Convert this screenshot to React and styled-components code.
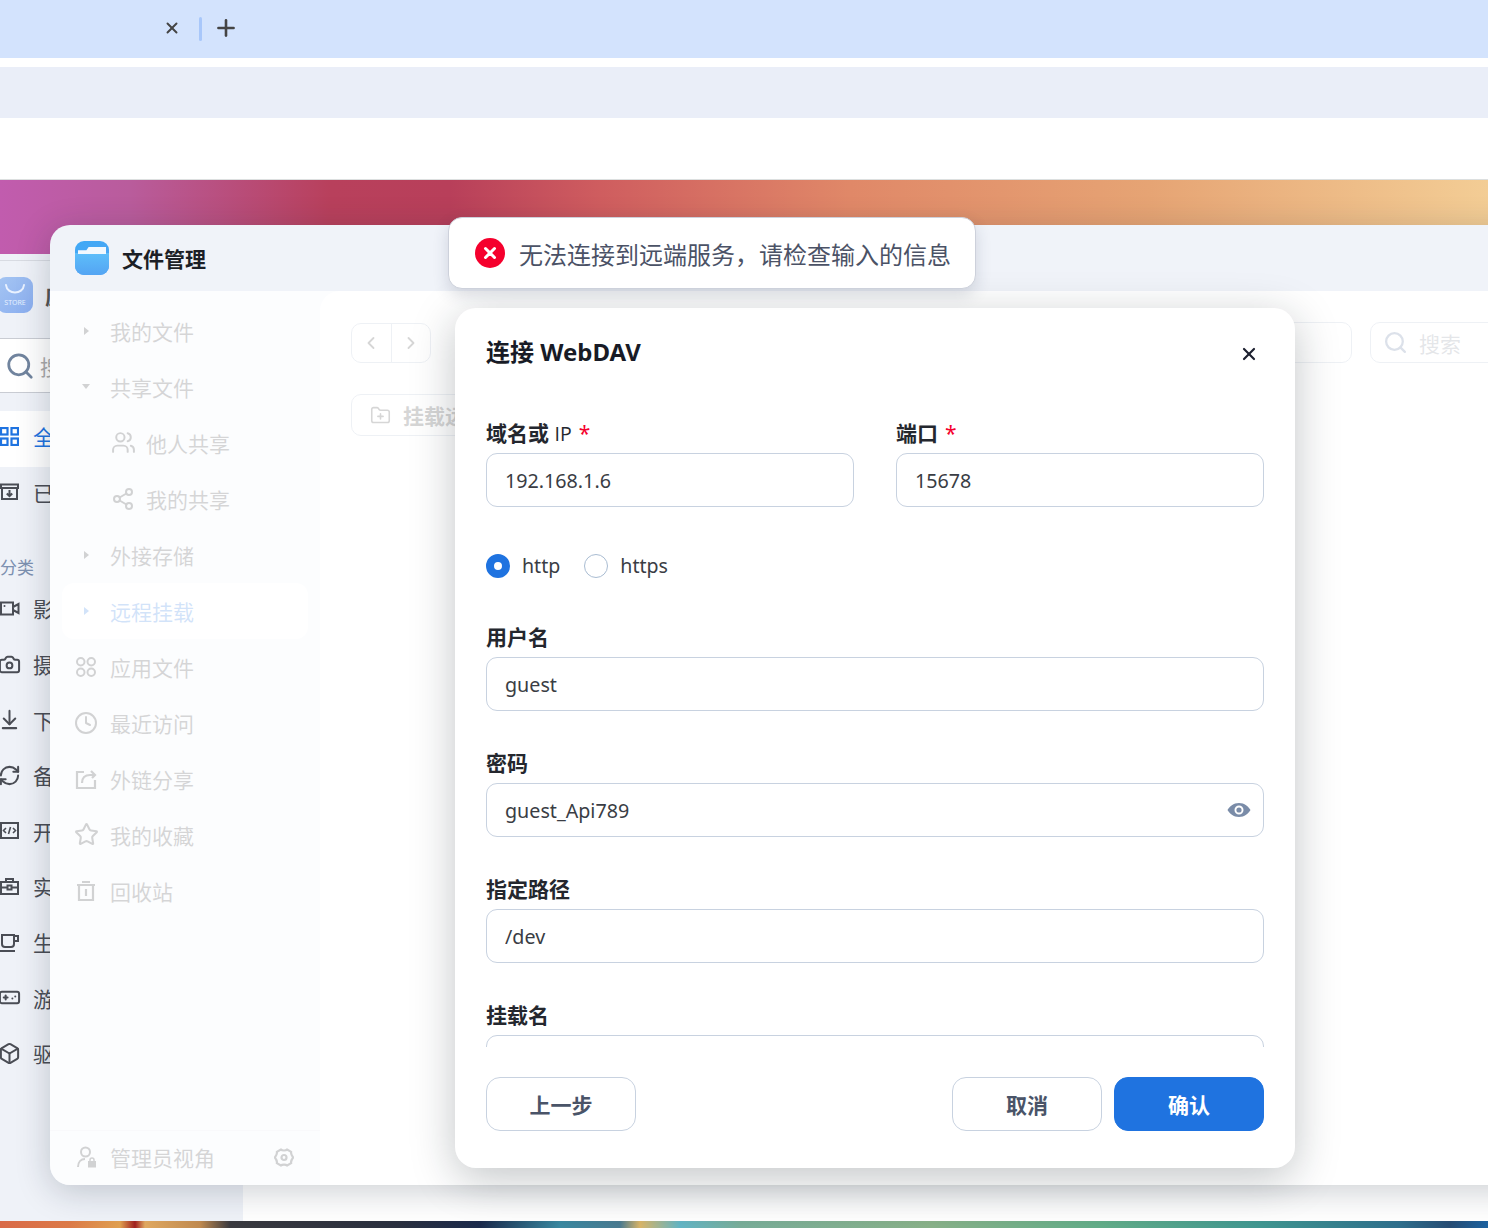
import React from 'react'
import styled, { createGlobalStyle } from 'styled-components'
import {
  X, Plus, ChevronLeft, ChevronRight, Search, Users, Share2, Clock, Star, FolderPlus,
  Camera, ArrowDownToLine, RefreshCw, Gamepad, Box,
} from 'lucide-react'

const GlobalStyle = createGlobalStyle`
  html, body { margin: 0; padding: 0; height: 100%; overflow: hidden; background: #fff; }
  body { font-family: "Noto Sans", "Noto Sans CJK SC", sans-serif; color: #333; }
  * { box-sizing: border-box; }
`

const Page = styled.div`
  width: 1488px;
  height: 1228px;
  display: flex;
  flex-direction: column;
  overflow: hidden;
`

const TabBar = styled.div`
  height: 58px;
  background: #d3e3fd;
  display: flex;
  align-items: center;
  padding: 0 0 2px 163px;
  color: #444;
`
const TabDivider = styled.div`
  width: 3px;
  height: 24px;
  margin: 2px 11px 0 18px;
  border-radius: 2px;
  background: #a8c7fa;
`
const AddressBar = styled.div`
  height: 51px;
  margin-top: 9px;
  background: #eaeef8;
`
const Blank = styled.div`
  height: 62px;
  border-bottom: 1px solid #dcdfdf;
`

const Desktop = styled.div`
  position: relative;
  flex: 1;
  background:
    linear-gradient(90deg, #d96a48 0, #dc7a48 70px, #e0a050 120px, #a02020 135px, #e0a860 145px, #c08a50 200px, #3a3a40 230px, #2a3040 400px, #1b2a4c 480px, #3a88a0 560px, #4a7a90 620px, #d8b468 640px, #62b4c4 680px, #78ac98 740px, #88b088 930px, #62ac88 1100px, #409690 1260px, #2e6e8c 1400px, #264c74 1450px, #1c62a0 1488px) bottom / 100% 7px no-repeat,
    linear-gradient(90deg, #c15cae 0, #b95c9c 130px, #b8405c 330px, #b83f5a 450px, #cf5d5f 600px, #e08868 850px, #e6a474 1150px, #f3cd95 1488px);
`

/* store window behind */
const StoreWindow = styled.div`
  position: absolute;
  left: -20px;
  top: 74px;
  width: 1530px;
  height: 967px;
  display: grid;
  grid-template-columns: 263px 1fr;
  border-radius: 14px 14px 0 0;
  overflow: hidden;
  background: #fff;
`
const StoreSide = styled.div`
  background: #eff2f8;
  display: flex;
  flex-direction: column;
  padding-top: 6px;
`
const StoreBrand = styled.div`
  height: 79px;
  display: flex;
  align-items: center;
  gap: 12px;
  padding: 0 0 10px 17px;
  border-top: 1px solid #d8dbe2;
  border-bottom: 1px solid #c9ccd3;
  font-size: 21px;
  font-weight: 700;
  color: #555;
`
const StoreLogo = styled.div`
  width: 36px;
  height: 36px;
  border-radius: 9px;
  background: linear-gradient(135deg, #a5c5f2, #8aaef0);
  display: flex;
  flex-direction: column;
  align-items: center;
  justify-content: center;
  color: #e6f0ff;
  font-size: 7px;
  line-height: 8px;
  font-weight: 400;
  svg { display: block; margin-bottom: 4px; }
`
const StoreSearch = styled.div`
  height: 54px;
  background: #fff;
  border-bottom: 1px solid #c9ccd3;
  display: flex;
  align-items: center;
  gap: 5px;
  padding-left: 25px;
  font-size: 21px;
  color: #aaa;
  svg { color: #71849e; }
`
const StoreList = styled.div`
  padding-top: 18px;
  display: flex;
  flex-direction: column;
`
const StoreRow = styled.div`
  height: 55.6px;
  display: flex;
  align-items: center;
  gap: 14px;
  padding: 0 0 5px 20px;
  font-size: 21px;
  white-space: nowrap;
  color: ${p => (p.$active ? '#1f73e0' : '#4a4d55')};
  background: ${p => (p.$active ? '#fff' : 'transparent')};
`
const StoreIcon = styled.span`
  width: 19px;
  height: 24px;
  flex: none;
  display: flex;
  align-items: center;
  justify-content: center;
  svg { flex: none; }
`
const StoreLabel = styled.div`
  height: 61px;
  padding: 33px 0 0 20px;
  font-size: 17px;
  line-height: 26px;
  color: #7c90b0;
`
const StoreContent = styled.div`
  background: #fff;
`

/* file manager */
const FileWindow = styled.div`
  position: absolute;
  left: 50px;
  top: 45px;
  width: 1530px;
  height: 960px;
  display: flex;
  flex-direction: column;
  border-radius: 20px;
  background: #f0f3f9;
  box-shadow: 0 6px 34px rgba(20, 30, 50, 0.22);
`
const FileHeader = styled.div`
  height: 66px;
  flex: none;
  display: flex;
  align-items: center;
  gap: 13px;
  padding-left: 25px;
  font-size: 21px;
  font-weight: 700;
  color: #1c1f26;
`
const FolderLogo = styled.div`
  position: relative;
  width: 34px;
  height: 34px;
  border-radius: 9px;
  background: linear-gradient(160deg, #3fa9f6, #54a2f2);
  overflow: hidden;
`
const FolderTab = styled.div`
  position: absolute;
  left: 3px;
  right: 3px;
  top: 6px;
  height: 7px;
  background: #f2f8fe;
  clip-path: polygon(0 45%, 30% 45%, 38% 0, 100% 0, 100% 100%, 0 100%);
`
const FolderFront = styled.div`
  position: absolute;
  left: 0;
  right: 0;
  top: 12px;
  bottom: 0;
  background: linear-gradient(180deg, #5dbefa, #54a4f3);
`
const FileBody = styled.div`
  position: relative;
  flex: 1;
  display: flex;
  min-height: 0;
`
const Sidebar = styled.div`
  width: 270px;
  flex: none;
  display: flex;
  flex-direction: column;
`
const SideList = styled.div`
  flex: 1;
  padding: 12px 12px 0;
`
const SideRow = styled.div`
  height: 56px;
  display: flex;
  align-items: center;
  gap: ${p => (p.$sub ? '12px' : '14px')};
  padding: 0 0 1px ${p => (p.$sub ? '50px' : '14px')};
  border-radius: 12px;
  font-size: 21px;
  color: ${p => (p.$active ? '#1f73e0' : '#2f3136')};
  background: ${p => (p.$active ? '#fff' : 'transparent')};
`
const SideIcon = styled.span`
  width: ${p => (p.$sub ? '22px' : '20px')};
  height: 22px;
  flex: none;
  display: flex;
  align-items: center;
  justify-content: center;
  color: ${p => (p.$active ? '#1f73e0' : '#1c1f24')};
  svg { flex: none; }
`
const Caret = styled.span`
  width: 0;
  height: 0;
  ${p => (p.$down
    ? 'border-left: 4px solid transparent; border-right: 4px solid transparent; border-top: 5px solid currentColor;'
    : 'border-top: 4px solid transparent; border-bottom: 4px solid transparent; border-left: 5px solid currentColor;')}
`
const SideFooter = styled.div`
  height: 55px;
  flex: none;
  display: flex;
  align-items: center;
  gap: 13px;
  padding: 0 26px 2px 27px;
  border-top: 1px solid #dfe2e8;
  font-size: 21px;
  color: #2f3136;
  svg { flex: none; color: #1c1f24; }
`
const FooterText = styled.span`
  flex: 1;
`
const Main = styled.div`
  flex: 1;
  background: #fff;
  border-radius: 20px 0 20px 0;
  padding: 31px 30px 0 31px;
`
const Toolbar = styled.div`
  display: flex;
  align-items: flex-start;
`
const NavGroup = styled.div`
  width: 80px;
  height: 40px;
  margin-top: 1px;
  display: flex;
  border: 1px solid #aab8cc;
  border-radius: 10px;
  color: #333;
`
const NavBtn = styled.div`
  flex: 1;
  display: flex;
  align-items: center;
  justify-content: center;
  & + & { border-left: 1px solid #aab8cc; }
`
const FilterBox = styled.div`
  width: 200px;
  height: 41px;
  margin-left: auto;
  border: 1px solid #aab8cc;
  border-radius: 10px;
`
const SearchBox = styled.div`
  width: 180px;
  height: 41px;
  margin-left: 18px;
  display: flex;
  align-items: center;
  gap: 11px;
  padding-left: 12px;
  border: 1px solid #aab8cc;
  border-radius: 10px;
  font-size: 21px;
  color: #7b8290;
  svg { color: #4f6a94; }
`
const MountBtn = styled.div`
  width: 190px;
  height: 42px;
  margin-top: 31px;
  display: flex;
  align-items: center;
  gap: 12px;
  padding-left: 18px;
  border: 1px solid #aab8cc;
  border-radius: 10px;
  font-size: 21px;
  font-weight: 700;
  white-space: nowrap;
  color: #333;
`
const Mask = styled.div`
  position: absolute;
  inset: 0;
  border-radius: 0 0 20px 20px;
  background: rgba(255, 255, 255, 0.8);
`

/* toast + modal */
const Toast = styled.div`
  position: absolute;
  left: 448px;
  top: 37px;
  width: 528px;
  height: 72px;
  display: flex;
  align-items: center;
  gap: 14px;
  padding: 0 0 0 26px;
  background: #fff;
  border: 1px solid #cdd1db;
  border-radius: 14px;
  box-shadow: 0 6px 16px rgba(40, 50, 80, 0.16);
  font-size: 24px;
  color: #4b5266;
  white-space: nowrap;
`
const Modal = styled.div`
  position: absolute;
  left: 455px;
  top: 128px;
  width: 840px;
  height: 860px;
  display: flex;
  flex-direction: column;
  background: #fff;
  border-radius: 21px;
  box-shadow: 0 10px 44px rgba(20, 30, 40, 0.26);
`
const ModalHead = styled.div`
  height: 112px;
  flex: none;
  display: flex;
  justify-content: space-between;
  padding: 26px 36px 0 31px;
`
const ModalTitle = styled.h2`
  margin: 0;
  font-size: 24px;
  line-height: 36px;
  font-weight: 700;
  color: #181b26;
`
const CloseBtn = styled.div`
  height: 36px;
  margin-top: 2px;
  display: flex;
  align-items: center;
  color: #1d2030;
`
const ModalBody = styled.div`
  flex: 1;
  min-height: 0;
  overflow: hidden;
  padding: 0 31px;
  display: flex;
  flex-direction: column;
  gap: 39px;
`
const TwoCols = styled.div`
  display: grid;
  grid-template-columns: 368px 368px;
  gap: 42px;
`
const Field = styled.div`
  flex: none;
  display: flex;
  flex-direction: column;
  gap: 5px;
`
const Label = styled.label`
  height: 28px;
  font-size: 21px;
  line-height: 26px;
  font-weight: 700;
  color: #24272e;
`
const LabelLatin = styled.span`
  font-family: "Open Sans", "Noto Sans", sans-serif;
  font-size: 19.5px;
  font-weight: 500;
`
const Required = styled.span`
  margin-left: 7px;
  font-weight: 400;
  color: #f5002d;
`
const InputWrap = styled.div`
  position: relative;
`
const Input = styled.input`
  display: block;
  width: 100%;
  height: 54px;
  padding: 0 18px;
  border: 1px solid #c8d2e0;
  border-radius: 11px;
  background: #fff;
  font-family: inherit;
  font-size: 19.7px;
  color: #3a3d44;
  outline: none;
`
const EyeIcon = styled.svg`
  position: absolute;
  right: 13px;
  top: 17px;
`
const RadioRow = styled.div`
  height: 39px;
  flex: none;
  display: flex;
  align-items: center;
  gap: 24px;
`
const RadioItem = styled.div`
  display: flex;
  align-items: center;
  gap: 12px;
  font-size: 19.6px;
  color: #3a3d44;
`
const RadioDot = styled.span`
  width: 24px;
  height: 24px;
  border-radius: 50%;
  background: #fff;
  border: ${p => (p.$on ? '8px solid #1f73e0' : '1px solid #a9bcd2')};
`
const ModalFoot = styled.div`
  height: 121px;
  flex: none;
  display: flex;
  align-items: flex-start;
  gap: 12px;
  padding: 30px 31px 0;
`
const Btn = styled.button`
  width: 150px;
  height: 54px;
  border-radius: 14px;
  border: 1px solid ${p => (p.$primary ? '#1f73e0' : '#c8d2e0')};
  background: ${p => (p.$primary ? '#1f73e0' : '#fff')};
  color: ${p => (p.$primary ? '#fff' : '#4a5468')};
  font-family: inherit;
  font-size: 21px;
  font-weight: 700;
  margin-left: ${p => (p.$push ? 'auto' : '0')};
`

const GridIcon = () => (
  <svg width="19" height="19" viewBox="0 0 19 19" fill="none" stroke="currentColor" strokeWidth="2.2">
    <rect x="1" y="1" width="6.5" height="6.5" /><rect x="11.5" y="1" width="6.5" height="6.5" />
    <rect x="1" y="11.5" width="6.5" height="6.5" /><rect x="11.5" y="11.5" width="6.5" height="6.5" />
  </svg>
)
const InstalledIcon = () => (
  <svg width="19" height="19" viewBox="0 0 19 19" fill="none" stroke="currentColor" strokeWidth="2">
    <path d="M2 6v11h15V6M1 2.500h17V6H1z" /><path d="M9.500 8v6M6.800 11.500l2.700 2.700 2.700-2.700" />
  </svg>
)
const VideoIcon = () => (
  <svg width="20" height="19" viewBox="0 0 20 19" fill="none" stroke="currentColor" strokeWidth="2">
    <path d="M1 3.500h12v12H1zM13 8l5.500-3v9L13 11" />
    <circle cx="4.500" cy="7" r="1" fill="currentColor" stroke="none" />
  </svg>
)
const CodeIcon = () => (
  <svg width="19" height="19" viewBox="0 0 19 19" fill="none" stroke="currentColor" strokeWidth="2">
    <path d="M1 2h17v15H1z" />
    <path d="M6 7l-2.500 2.500L6 12M13 7l2.500 2.500L13 12M10.500 6l-2 7" strokeWidth="1.600" />
  </svg>
)
const ToolboxIcon = () => (
  <svg width="19" height="19" viewBox="0 0 19 19" fill="none" stroke="currentColor" strokeWidth="2">
    <path d="M1 5h17v12H1zM6 5V2h7v3M1 10.500h17" />
    <rect x="7.500" y="8.500" width="4" height="4" fill="#eff2f8" />
  </svg>
)
const CupIcon = () => (
  <svg width="19" height="19" viewBox="0 0 19 19" fill="none" stroke="currentColor" strokeWidth="2">
    <path d="M2 2h12v9a3 3 0 0 1-3 3H5a3 3 0 0 1-3-3zM14 3h4v5h-4M0 18h15" />
  </svg>
)
const AppsIcon = () => (
  <svg width="20" height="20" viewBox="0 0 20 20" fill="none" stroke="currentColor" strokeWidth="2">
    <rect x="1" y="1" width="7.500" height="7.500" rx="3.700" />
    <rect x="11.500" y="1" width="7.500" height="7.500" rx="3.700" />
    <rect x="1" y="11.500" width="7.500" height="7.500" rx="3.700" />
    <rect x="11.500" y="11.500" width="7.500" height="7.500" rx="3.700" />
  </svg>
)
const LinkShareIcon = () => (
  <svg width="22" height="22" viewBox="0 0 22 22" fill="none" stroke="currentColor" strokeWidth="2.200">
    <path d="M9 4H2v16h18v-8" /><path d="M7 15c0-5 3-8 8-8h4M16 3l4 4-3 3" />
  </svg>
)
const TrashIcon = () => (
  <svg width="20" height="20" viewBox="0 0 20 20" fill="none" stroke="currentColor" strokeWidth="2.200">
    <path d="M1 4h18M6 1h8M3 4v15h14V4M10 8v7" />
  </svg>
)
const AdminIcon = () => (
  <svg width="20" height="22" viewBox="0 0 20 22" fill="none" stroke="currentColor" strokeWidth="2">
    <circle cx="8.500" cy="6" r="4.500" />
    <path d="M1 21c0-5 3-8 7-8" />
    <rect x="11" y="15" width="8" height="6.500" fill="currentColor" stroke="none" />
    <path d="M13 15.500v-1.500a2 2 0 0 1 4 0v1.500" strokeWidth="1.500" />
  </svg>
)
const GearIcon = () => (
  <svg width="20" height="21" viewBox="0 0 20 21" fill="none" stroke="currentColor" strokeWidth="2.200" strokeLinejoin="round">
    <path d="M7 2.500c1 1.300 5 1.300 6 0l4.200 2.400c-.6 1.500 1.400 4.800 2 5.600-.6.800-2.600 4.100-2 5.600L13 18.500c-1-1.300-5-1.300-6 0l-4.200-2.400c.6-1.500-1.400-4.800-2-5.600.6-.8 2.600-4.100 2-5.600z" />
    <circle cx="10" cy="10.500" r="2.500" />
  </svg>
)

const CameraIcon = () => <Camera size={23} strokeWidth={2.1} />
const DownloadIcon = () => <ArrowDownToLine size={23} strokeWidth={2.1} />
const SyncIcon = () => <RefreshCw size={23} strokeWidth={2.1} />
const PadIcon = () => <Gamepad size={23} strokeWidth={2.1} />
const BoxIcon = () => <Box size={23} strokeWidth={2.1} />

const storeTop = [
  { Icon: GridIcon, text: '全部', active: true },
  { Icon: InstalledIcon, text: '已安装' },
]
const storeCats = [
  { Icon: VideoIcon, text: '影视' },
  { Icon: CameraIcon, text: '摄影' },
  { Icon: DownloadIcon, text: '下载' },
  { Icon: SyncIcon, text: '备份' },
  { Icon: CodeIcon, text: '开发' },
  { Icon: ToolboxIcon, text: '实用' },
  { Icon: CupIcon, text: '生活' },
  { Icon: PadIcon, text: '游戏' },
  { Icon: BoxIcon, text: '驱动' },
]

function App() {
  return (
    <Page>
      <GlobalStyle />
      <TabBar>
        <X size={18} strokeWidth={2.6} />
        <TabDivider />
        <Plus size={26} strokeWidth={2.4} />
      </TabBar>
      <AddressBar />
      <Blank />
      <Desktop>
        <StoreWindow>
          <StoreSide>
            <StoreBrand>
              <StoreLogo>
                <svg width="22" height="12" viewBox="0 0 22 12" fill="none" stroke="#eaf2ff" strokeWidth="2" strokeLinecap="round">
                  <path d="M2 2c1 10 17 10 18 0" />
                </svg>
                STORE
              </StoreLogo>
              应用商店
            </StoreBrand>
            <StoreSearch>
              <Search size={30} strokeWidth={2.2} />
              搜索
            </StoreSearch>
            <StoreList>
              {storeTop.map(({ Icon, text, active }) => (
                <StoreRow key={text} $active={active}><StoreIcon><Icon /></StoreIcon>{text}</StoreRow>
              ))}
              <StoreLabel>分类</StoreLabel>
              {storeCats.map(({ Icon, text }) => (
                <StoreRow key={text}><StoreIcon><Icon /></StoreIcon>{text}</StoreRow>
              ))}
            </StoreList>
          </StoreSide>
          <StoreContent />
        </StoreWindow>

        <FileWindow>
          <FileHeader>
            <FolderLogo><FolderFront /><FolderTab /></FolderLogo>
            文件管理
          </FileHeader>
          <FileBody>
            <Sidebar>
              <SideList>
                <SideRow><SideIcon><Caret /></SideIcon>我的文件</SideRow>
                <SideRow><SideIcon><Caret $down /></SideIcon>共享文件</SideRow>
                <SideRow $sub><SideIcon $sub><Users size={25} strokeWidth={1.9} /></SideIcon>他人共享</SideRow>
                <SideRow $sub><SideIcon $sub><Share2 size={24} strokeWidth={2} /></SideIcon>我的共享</SideRow>
                <SideRow><SideIcon><Caret /></SideIcon>外接存储</SideRow>
                <SideRow $active><SideIcon $active><Caret /></SideIcon>远程挂载</SideRow>
                <SideRow><SideIcon><AppsIcon /></SideIcon>应用文件</SideRow>
                <SideRow><SideIcon><Clock size={24} strokeWidth={2} /></SideIcon>最近访问</SideRow>
                <SideRow><SideIcon><LinkShareIcon /></SideIcon>外链分享</SideRow>
                <SideRow><SideIcon><Star size={25} strokeWidth={2} /></SideIcon>我的收藏</SideRow>
                <SideRow><SideIcon><TrashIcon /></SideIcon>回收站</SideRow>
              </SideList>
              <SideFooter>
                <AdminIcon />
                <FooterText>管理员视角</FooterText>
                <GearIcon />
              </SideFooter>
            </Sidebar>
            <Main>
              <Toolbar>
                <NavGroup>
                  <NavBtn><ChevronLeft size={20} strokeWidth={2.2} /></NavBtn>
                  <NavBtn><ChevronRight size={20} strokeWidth={2.2} /></NavBtn>
                </NavGroup>
                <FilterBox />
                <SearchBox>
                  <Search size={25} strokeWidth={2.2} />
                  搜索
                </SearchBox>
              </Toolbar>
              <MountBtn><FolderPlus size={21} strokeWidth={1.8} />挂载远程</MountBtn>
            </Main>
            <Mask />
          </FileBody>
        </FileWindow>

        <Modal>
          <ModalHead>
            <ModalTitle>连接 WebDAV</ModalTitle>
            <CloseBtn><X size={20} strokeWidth={2.6} /></CloseBtn>
          </ModalHead>
          <ModalBody>
            <TwoCols>
              <Field>
                <Label>域名或 <LabelLatin>IP</LabelLatin><Required>*</Required></Label>
                <Input readOnly value="192.168.1.6" />
              </Field>
              <Field>
                <Label>端口<Required>*</Required></Label>
                <Input readOnly value="15678" />
              </Field>
            </TwoCols>
            <RadioRow>
              <RadioItem><RadioDot $on />http</RadioItem>
              <RadioItem><RadioDot />https</RadioItem>
            </RadioRow>
            <Field>
              <Label>用户名</Label>
              <Input readOnly value="guest" />
            </Field>
            <Field>
              <Label>密码</Label>
              <InputWrap>
                <Input readOnly value="guest_Api789" />
                <EyeIcon width="24" height="20" viewBox="0 0 24 20">
                  <path fillRule="evenodd" fill="#7a8ca8" d="M12 3c5.500 0 9.500 3.500 11.500 7-2 3.500-6 7-11.500 7S2.500 13.500.5 10C2.500 6.500 6.500 3 12 3zm0 2.500a4.500 4.500 0 1 0 0 9 4.500 4.500 0 0 0 0-9z" />
                  <circle cx="12" cy="10" r="2.600" fill="#7a8ca8" />
                </EyeIcon>
              </InputWrap>
            </Field>
            <Field>
              <Label>指定路径</Label>
              <Input readOnly value="/dev" />
            </Field>
            <Field>
              <Label>挂载名</Label>
              <Input readOnly value="" />
            </Field>
          </ModalBody>
          <ModalFoot>
            <Btn>上一步</Btn>
            <Btn $push>取消</Btn>
            <Btn $primary>确认</Btn>
          </ModalFoot>
        </Modal>

        <Toast>
          <svg width="30" height="30" viewBox="0 0 30 30">
            <circle cx="15" cy="15" r="15" fill="#f5002d" />
            <path d="M10.500 10.500l9 9M19.500 10.500l-9 9" stroke="#fff" strokeWidth="3" strokeLinecap="round" />
          </svg>
          无法连接到远端服务，请检查输入的信息
        </Toast>
      </Desktop>
    </Page>
  )
}

export default App
